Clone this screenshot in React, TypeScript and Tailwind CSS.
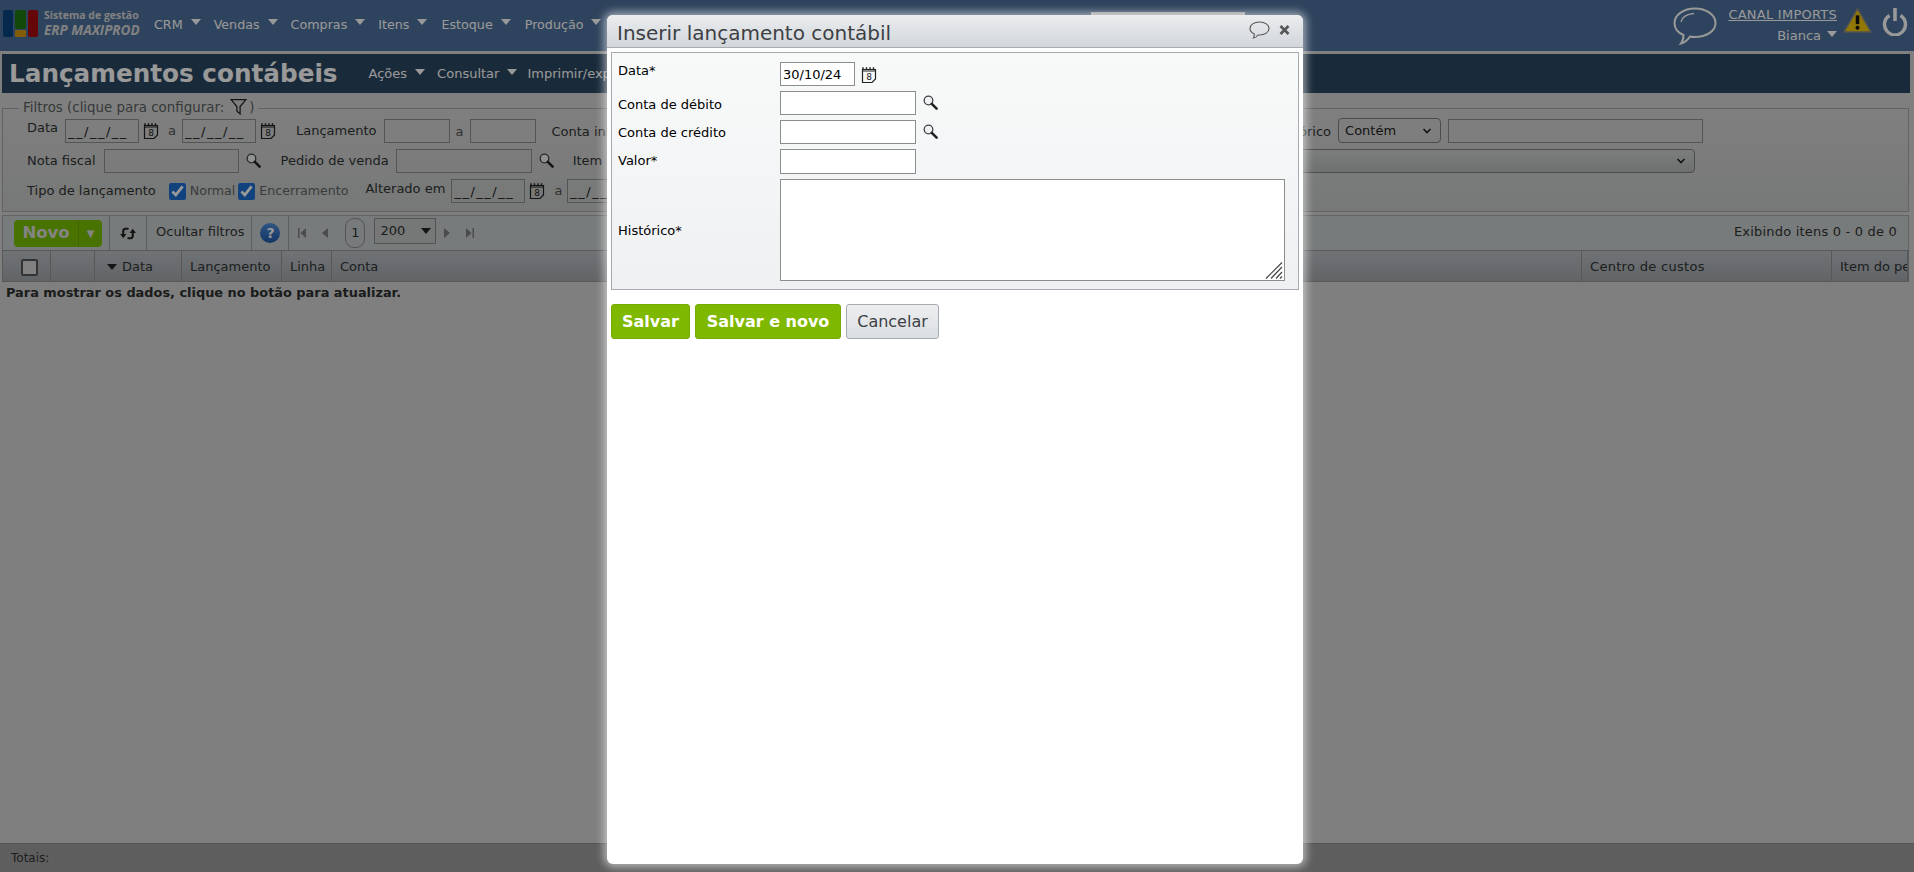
import React from "react";

const Caret = ({ c = "border-t-white" }: { c?: string }) => (
  <span className={`inline-block w-0 h-0 border-l-[5px] border-r-[5px] border-t-[6px] border-l-transparent border-r-transparent ${c}`} />
);

const NavItem = ({ label, ml }: { label: string; ml: string }) => (
  <div className={`flex items-center ${ml}`}>
    <span className="text-[12.7px] text-white mt-[2px]">{label}</span>
    <span className="ml-2 -mt-[4px] flex"><Caret /></span>
  </div>
);

const Cal = ({ className = "" }: { className?: string }) => (
  <svg width="16" height="18" viewBox="0 0 16 18" className={`shrink-0 ${className}`}>
    <path d="M1.5 3.5 H14.5 V13 L11 16.5 H1.5 Z" fill="none" stroke="#222" strokeWidth="1.2" />
    <path d="M2 1.2 V4 M5.5 1.2 V4 M9 1.2 V4 M12.5 1.2 V4" stroke="#222" strokeWidth="1.4" />
    <path d="M1.5 5 H14.5" stroke="#222" strokeWidth="1" />
    <text x="8" y="14" textAnchor="middle" fontSize="9" fontFamily="DejaVu Sans" fill="#222">8</text>
  </svg>
);

const Lens = ({ className = "" }: { className?: string }) => (
  <svg width="15" height="15" viewBox="0 0 15 15" className={`shrink-0 ${className}`}>
    <circle cx="5.5" cy="5.5" r="4.3" fill="#eef2f4" stroke="#444" strokeWidth="1.3" />
    <path d="M8.8 8.8 L13.6 13.6" stroke="#222" strokeWidth="2.6" strokeLinecap="round" />
  </svg>
);

const Field = ({ className, value = "", spaced = false }: { className: string; value?: string; spaced?: boolean }) => (
  <input
    readOnly
    value={value}
    className={`h-[24px] border border-[#8c8e8e] px-[2px] text-[13px] text-[#222] outline-none shrink-0 ${spaced ? "tracking-[1.5px]" : ""} ${className}`}
  />
);

const Chevron = () => (
  <svg width="10" height="7" viewBox="0 0 10 7" className="absolute right-[9px] top-1/2 -translate-y-1/2 pointer-events-none">
    <path d="M1.5 1.5 L5 5 L8.5 1.5" fill="none" stroke="#222" strokeWidth="1.6" />
  </svg>
);

const Lbl = ({ children, className = "" }: { children: React.ReactNode; className?: string }) => (
  <span className={`text-[13px] text-[#303333] whitespace-nowrap shrink-0 ${className}`}>{children}</span>
);

const Th = ({ w, children, grow }: { w?: string; children?: React.ReactNode; grow?: boolean }) => (
  <div className={`${w ?? ""} ${grow ? "grow min-w-0" : "shrink-0"} flex items-center h-full border-r border-[#8f9396] pl-2 pt-[2px] text-[13px] text-[#303436] whitespace-nowrap overflow-hidden`}>
    {children}
  </div>
);

const Sep = ({ className = "" }: { className?: string }) => <div className={`w-px h-[35px] bg-[#9a9e9e] shrink-0 ${className}`} />;

export default function App() {
  return (
    <div className="relative h-screen w-full overflow-hidden bg-[#d4d4d4] flex flex-col font-['DejaVu_Sans',sans-serif]">
      {/* top header */}
      <header className="h-[51px] shrink-0 bg-[#4e719b] flex items-start">
        <div className="w-[154px] shrink-0 flex pl-[3px] pt-[10px]">
          <svg width="36" height="27" viewBox="0 0 36 27" className="shrink-0">
            <rect x="0" y="0" width="10" height="27" rx="2" fill="#08457f" />
            <rect x="12" y="0" width="11" height="19" rx="2" fill="#1e7a10" />
            <rect x="12" y="20" width="11" height="7" rx="1" fill="#d89a10" />
            <rect x="25" y="0" width="10" height="27" rx="2" fill="#a80c10" />
          </svg>
          <div className="ml-[5px] leading-none text-[#d8d8d8] font-['Open_Sans',sans-serif] whitespace-nowrap">
            <div className="text-[10.5px] font-bold">Sistema de gestão</div>
            <div className="text-[13.5px] font-bold italic mt-[3px]">ERP MAXIPROD</div>
          </div>
        </div>
        <nav className="flex items-center h-[48px]">
          <NavItem label="CRM" ml="" />
          <NavItem label="Vendas" ml="ml-[13px]" />
          <NavItem label="Compras" ml="ml-[13px]" />
          <NavItem label="Itens" ml="ml-[13px]" />
          <NavItem label="Estoque" ml="ml-[14px]" />
          <NavItem label="Produção" ml="ml-[14px]" />
        </nav>
        <div className="ml-[490px] mt-[12px] w-[154px] h-[28px] bg-white shrink-0" />
        <div className="ml-auto flex items-start pr-[6px]">
          <svg width="44" height="38" viewBox="0 0 44 38" className="mt-[7px] shrink-0">
            <path d="M22 1.5 C33 1.5 42.5 7.5 42.5 16 C42.5 24.5 33 30 22 30 C20 30 18.5 30 17 29.5 C15 32.5 12 35.5 8 36.5 C10 34 10.5 31 10.5 28 C4.5 25.5 1.5 21 1.5 16 C1.5 7.5 11 1.5 22 1.5 Z" fill="none" stroke="#fff" strokeWidth="2" />
            <path d="M8 15 C9 10 14 7 21 6.5" fill="none" stroke="#fff" strokeWidth="1.4" />
          </svg>
          <div className="ml-[12px] w-[108px] flex flex-col items-end text-[13px] text-white">
            <span className="underline mt-[7px] leading-[16px] whitespace-nowrap tracking-[0.25px]">CANAL IMPORTS</span>
            <div className="flex items-center mt-[5px]">
              <span className="leading-[16px]">Bianca</span>
              <span className="ml-[6px] -mt-[4px] flex"><Caret /></span>
            </div>
          </div>
          <svg width="29" height="26" viewBox="0 0 28 25" className="ml-[6px] mt-[7px] shrink-0">
            <path d="M14 1.5 L27 24 H1 Z" fill="#f2c80a" stroke="#8a8a8a" strokeWidth="1.5" strokeLinejoin="round" />
            <path d="M14 8 V16.5" stroke="#111" strokeWidth="3.4" />
            <circle cx="14" cy="20" r="1.9" fill="#111" />
          </svg>
          <svg width="26" height="28" viewBox="0 0 26 28" className="ml-[10px] mt-[8px] shrink-0">
            <path d="M7.5 7.5 A10.5 10.5 0 1 0 18.5 7.5" fill="none" stroke="#fff" strokeWidth="3.4" />
            <path d="M13 0 V13" stroke="#fff" strokeWidth="3.6" />
          </svg>
        </div>
      </header>

      {/* page title */}
      <div className="mt-[3px] ml-[2px] mr-[4px] h-[39px] shrink-0 bg-[#2b4661] flex items-center">
        <h1 className="ml-[7px] text-[24.7px] font-bold text-white whitespace-nowrap">Lançamentos contábeis</h1>
        <div className="flex items-center ml-[31px]">
          <span className="text-[13px] text-white">Ações</span>
          <span className="ml-2 -mt-[4px] flex"><Caret /></span>
          <span className="text-[13px] text-white ml-[12px]">Consultar</span>
          <span className="ml-2 -mt-[4px] flex"><Caret /></span>
          <span className="text-[13px] text-white ml-[10px]">Imprimir/exportar</span>
        </div>
      </div>

      {/* filters */}
      <fieldset className="mt-[6px] ml-[2px] mr-[5px] shrink-0 border border-[#a3a6a6] bg-gradient-to-b from-[#d4d4d4] to-[#c6c9c7] h-[113px] block min-w-0">
        <legend className="ml-[16px] px-[4px] text-[13.4px] leading-[18px] text-[#5a5f5f] flex items-center whitespace-nowrap">
          Filtros (clique para configurar:
          <svg width="17" height="17" viewBox="0 0 16 16" className="ml-[6px] mr-[2px] -mt-[3px]">
            <path d="M1 1.5 H15 L9.5 8 V15 L6.5 12.5 V8 Z" fill="none" stroke="#222" strokeWidth="1.2" />
          </svg>
          )
        </legend>
        <div className="flex items-center h-[24px] mt-[2px] pl-[24px]">
          <Lbl className="-mt-[6px]">Data</Lbl>
          <Field className="ml-[7px] w-[74px]" value="__/__/__" spaced />
          <Cal className="ml-[4px]" />
          <Lbl className="ml-[9px] text-[#505454]">a</Lbl>
          <Field className="ml-[6px] w-[74px]" value="__/__/__" spaced />
          <Cal className="ml-[4px]" />
          <Lbl className="ml-[20px]">Lançamento</Lbl>
          <Field className="ml-[7px] w-[66px]" />
          <Lbl className="ml-[6px] mt-[2px] text-[#505454]">a</Lbl>
          <Field className="ml-[6px] w-[66px]" />
          <Lbl className="ml-[16px] mt-[2px]">Conta inicial</Lbl>
          <Lbl className="ml-[642px] mt-[2px]">Histórico</Lbl>
          <div className="relative ml-[7px] shrink-0 w-[103px] h-[25px] -mt-[1px]">
            <select className="appearance-none w-full h-full border border-[#7d7f7f] rounded-[4px] pl-[6px] text-[13px] text-[#222] outline-none">
              <option>Contém</option>
            </select>
            <Chevron />
          </div>
          <Field className="ml-[7px] w-[255px]" />
        </div>
        <div className="flex items-center h-[24px] mt-[6px] pl-[24px]">
          <Lbl>Nota fiscal</Lbl>
          <Field className="ml-[8px] w-[135px]" />
          <Lens className="ml-[7px] -mt-[2px]" />
          <Lbl className="ml-[20px]">Pedido de venda</Lbl>
          <Field className="ml-[7px] w-[136px]" />
          <Lens className="ml-[7px] -mt-[2px]" />
          <Lbl className="ml-[19px]">Item</Lbl>
          <div className="relative ml-[697px] shrink-0 w-[396px] h-[24px]">
            <select className="appearance-none w-full h-full border border-[#7d7f7f] rounded-[4px] bg-gradient-to-b from-[#cfd1d1] to-[#b8baba] outline-none" />
            <Chevron />
          </div>
        </div>
        <div className="flex items-center h-[24px] mt-[6px] pl-[24px]">
          <Lbl>Tipo de lançamento</Lbl>
          <input type="checkbox" readOnly checked className="ml-[13px] w-[17px] h-[17px] accent-[#1f6fd0] shrink-0" />
          <Lbl className="ml-[4px] !text-[12.6px] text-[#606565]">Normal</Lbl>
          <input type="checkbox" readOnly checked className="ml-[3px] w-[17px] h-[17px] accent-[#1f6fd0] shrink-0" />
          <Lbl className="ml-[4px] !text-[12.6px] text-[#606565]">Encerramento</Lbl>
          <Lbl className="ml-[17px] -mt-[4px]">Alterado em</Lbl>
          <Field className="ml-[6px] w-[74px]" value="__/__/__" spaced />
          <Cal className="ml-[4px]" />
          <Lbl className="ml-[9px] text-[#505454]">a</Lbl>
          <Field className="ml-[5px] w-[74px]" value="__/__/__" spaced />
        </div>
      </fieldset>

      {/* toolbar */}
      <div className="mt-[3px] ml-[2px] mr-[5px] h-[35px] shrink-0 border-t border-x border-[#a3a6a6] bg-[#c9cdcd] flex items-center">
        <div className="ml-[11px] flex w-[88px] h-[27px] shrink-0 self-start mt-[4px] rounded-[4px] bg-[#7ac000] text-[#dcdcdc]">
          <div className="w-[64px] text-[16.5px] font-bold flex items-center justify-center">Novo</div>
          <div className="w-[24px] border-l border-[#6ea800] text-[10px] flex items-center justify-center">▼</div>
        </div>
        <Sep className="ml-[7px]" />
        <svg width="18" height="13" viewBox="0 0 17 12" className="ml-[9px] mt-[1px] shrink-0">
          <path d="M9 1.5 H6 Q4 1.5 4 4 V7" fill="none" stroke="#222" strokeWidth="2" />
          <path d="M1 6.5 H7 L4 10.5 Z" fill="#222" />
          <path d="M8 10.5 H11 Q13 10.5 13 8 V5" fill="none" stroke="#222" strokeWidth="2" />
          <path d="M10 5.5 H16 L13 1.5 Z" fill="#222" />
        </svg>
        <Sep className="ml-[9px]" />
        <span className="ml-[9px] -mt-[2px] text-[13px] text-[#303333] whitespace-nowrap">Ocultar filtros</span>
        <Sep className="ml-[7px]" />
        <div className="ml-[8px] w-[20px] h-[20px] rounded-full bg-gradient-to-b from-[#4f8fdc] to-[#1f5aa8] text-white font-bold text-[14px] flex items-center justify-center shrink-0">?</div>
        <Sep className="ml-[8px]" />
        <svg width="10" height="12" viewBox="0 0 10 12" className="ml-[8px] shrink-0"><path d="M1 1 H2.5 V11 H1 Z M9 1 V11 L3.5 6 Z" fill="#7d8080" /></svg>
        <svg width="8" height="12" viewBox="0 0 8 12" className="ml-[14px] shrink-0"><path d="M7 1 V11 L1 6 Z" fill="#7d8080" /></svg>
        <div className="ml-[16px] w-[20px] h-[30px] rounded-[9px] border border-[#8a8c8c] text-[13px] text-[#303333] flex items-center justify-center shrink-0">1</div>
        <div className="ml-[9px] w-[62px] h-[26px] -mt-[4px] border border-[#8a8c8c] bg-[#c5c7c7] text-[13px] text-[#303333] pl-[5px] flex items-center justify-between pr-[4px] shrink-0">
          200
          <span className="flex"><span className="inline-block w-0 h-0 border-l-[5px] border-r-[5px] border-t-[6px] border-l-transparent border-r-transparent border-t-[#222]" /></span>
        </div>
        <svg width="8" height="12" viewBox="0 0 8 12" className="ml-[7px] shrink-0"><path d="M1 1 V11 L7 6 Z" fill="#7d8080" /></svg>
        <svg width="10" height="12" viewBox="0 0 10 12" className="ml-[14px] shrink-0"><path d="M1 1 V11 L6.5 6 Z M7.5 1 H9 V11 H7.5 Z" fill="#7d8080" /></svg>
        <span className="ml-auto mr-[11px] -mt-[2px] text-[13px] text-[#303333] whitespace-nowrap tracking-[0.2px]">Exibindo itens 0 - 0 de 0</span>
      </div>

      {/* table head */}
      <div className="ml-[2px] mr-[5px] h-[32px] shrink-0 flex border-y border-[#8f9396] border-x bg-gradient-to-b from-[#bcc1c6] to-[#a3a7aa]">
        <Th w="w-[48px]">
          <div className="w-[17px] h-[17px] ml-[10px] rounded-[2px] border-2 border-[#555] bg-[#d8d8d8]" />
        </Th>
        <Th w="w-[44px]" />
        <Th w="w-[87px]">
          <span className="ml-[4px] mr-[5px] flex"><span className="inline-block w-0 h-0 border-l-[5px] border-r-[5px] border-t-[6px] border-l-transparent border-r-transparent border-t-[#222]" /></span>
          Data
        </Th>
        <Th w="w-[100px]">Lançamento</Th>
        <Th w="w-[50px]">Linha</Th>
        <Th w="w-[1250px]">Conta</Th>
        <Th w="w-[250px]"><span className="tracking-[0.3px]">Centro de custos</span></Th>
        <Th grow>Item do pe</Th>
      </div>

      {/* table body */}
      <div className="grow min-h-0 pl-[6px] pt-[3px] text-[12.9px] font-bold text-[#2e3030] leading-[16px]">
        Para mostrar os dados, clique no botão para atualizar.
      </div>
      <div className="h-[29px] shrink-0 bg-[#9d9d9d] border-t border-[#8b8b8b] flex items-center pl-[11px] text-[12px] text-[#333]">
        Totais:
      </div>

      {/* overlay */}
      <div className="absolute inset-0 bg-black/40" />

      {/* dialog */}
      <div className="absolute left-[607px] top-[15px] w-[696px] h-[849px] rounded-[6px] bg-white shadow-[0_0_9px_3px_rgba(255,255,255,0.55)] flex flex-col">
        <div className="h-[33px] shrink-0 rounded-t-[6px] border-b border-[#a6adb5] bg-gradient-to-b from-[#ebedef] to-[#d2d6da] flex items-center px-[10px]">
          <span className="text-[20px] leading-none text-[#3c4043] whitespace-nowrap mt-[4px]">Inserir lançamento contábil</span>
          <svg width="21" height="18" viewBox="0 0 21 18" className="ml-auto mr-[9px] -mt-[2px] shrink-0">
            <path d="M10.5 1 C16 1 20 3.8 20 7.5 C20 11.2 16 14 10.5 14 H9 C8 15.5 6.5 16.7 4.5 17 C5.2 15.8 5.4 14.5 5.3 13 C2.6 11.8 1 9.8 1 7.5 C1 3.8 5 1 10.5 1 Z" fill="none" stroke="#555" strokeWidth="1.1" />
          </svg>
          <svg width="11" height="10" viewBox="0 0 11 10" className="mr-[3px] -mt-[2px] shrink-0">
            <path d="M1.5 1 L9.5 9 M9.5 1 L1.5 9" stroke="#555" strokeWidth="2.6" />
          </svg>
        </div>

        <div className="mt-[4px] mx-[4px] h-[238px] shrink-0 border border-[#a6abb1] bg-gradient-to-b from-[#f8fafa] to-[#eef0f2] pl-[6px] pr-[13px] text-[13px] text-black">
          <div className="flex items-start mt-[9px] h-[24px]">
            <span className="w-[162px] shrink-0 -mt-[1px]">Data*</span>
            <Field className="w-[75px] bg-white !text-black" value="30/10/24" />
            <Cal className="ml-[6px] mt-[4px]" />
          </div>
          <div className="flex items-center mt-[5px] h-[24px]">
            <span className="w-[162px] shrink-0 mt-[3px]">Conta de débito</span>
            <Field className="w-[136px] bg-white" />
            <Lens className="ml-[7px] -mt-[1px]" />
          </div>
          <div className="flex items-center mt-[5px] h-[24px]">
            <span className="w-[162px] shrink-0 mt-[2px]">Conta de crédito</span>
            <Field className="w-[136px] bg-white" />
            <Lens className="ml-[7px] -mt-[2px]" />
          </div>
          <div className="flex items-center mt-[5px] h-[25px]">
            <span className="w-[162px] shrink-0 -mt-[2px]">Valor*</span>
            <Field className="w-[136px] !h-[25px] bg-white" />
          </div>
          <div className="flex items-center mt-[5px] h-[102px]">
            <span className="w-[162px] shrink-0 mt-[1px]">Histórico*</span>
            <div className="relative grow h-full">
              <textarea readOnly className="block w-full h-full border border-[#8c8e8e] bg-white resize-none outline-none" />
              <svg width="18" height="17" viewBox="0 0 18 17" className="absolute right-[2px] bottom-[2px]">
                <path d="M1 16.5 L17 0.5 M6 16.5 L17 5 M11 16.5 L17 10 M15 16.5 L17 14.5" stroke="#444" strokeWidth="1.2" fill="none" />
              </svg>
            </div>
          </div>
        </div>

        <div className="mt-[14px] ml-[4px] flex gap-[5px]">
          <button className="w-[79px] h-[35px] rounded-[3px] bg-[#7fb800] border border-[#76ab00] text-white font-bold text-[16px]">Salvar</button>
          <button className="w-[146px] h-[35px] rounded-[3px] bg-[#7fb800] border border-[#76ab00] text-white font-bold text-[16px]">Salvar e novo</button>
          <button className="w-[93px] h-[35px] rounded-[3px] bg-gradient-to-b from-[#eceef0] to-[#dcdfe2] border border-[#a6abb1] text-[#3c4043] text-[16px]">Cancelar</button>
        </div>
      </div>
    </div>
  );
}
